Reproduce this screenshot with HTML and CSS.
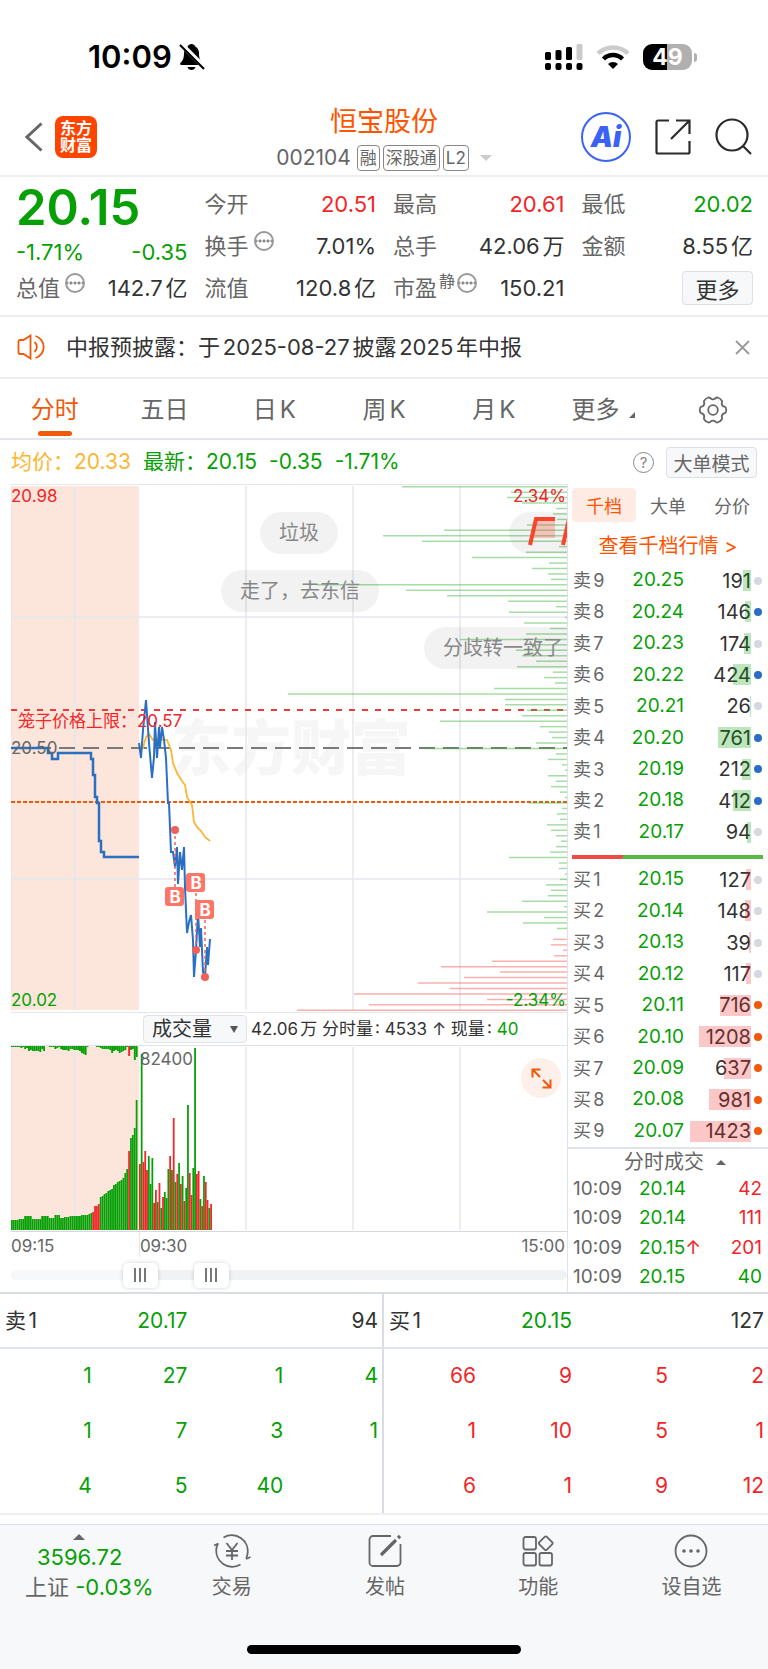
FILE: index.html
```html
<!DOCTYPE html>
<html lang="zh-CN">
<head>
  <meta charset="UTF-8">
  <meta name="viewport" content="width=device-width, initial-scale=1">
  <title>恒宝股份 002104</title>
  <link rel="stylesheet" href="styles.css">
</head>
<body>

  <div class="status-bar">
    <div class="status-left">
      <span class="clock">10:09</span>
      <svg width="26" height="28" viewBox="0 0 26 28">
        <path d="M12.500 1c-2 0-3 1-3.500 2.200C6.500 4.500 5 7 5 10c0 5-1 7.500-3.500 9.800-.7.800-.4 2.200.8 2.200h20.400c1.200 0 1.500-1.400.8-2.200C21 17.500 20 15 20 10c0-3-1.500-5.500-4-6.800C15.500 2 14.500 1 12.500 1zM8.500 24a4.200 4.200 0 0 0 8 0z" fill="#000"/>
        <path d="M2 1l24 24" stroke="#fff" stroke-width="5"/>
        <path d="M1 2l24 24" stroke="#000" stroke-width="2.200"/>
      </svg>
    </div>
    <div class="status-right">
      <svg width="38" height="27" viewBox="0 0 38 27">
        <g fill="#000">
          <rect x="0" y="8" width="6" height="8" rx="1.500"/>
          <rect x="10.500" y="6" width="6" height="10" rx="1.500"/>
          <rect x="21" y="3" width="6" height="13" rx="1.500"/>
          <rect x="0" y="19" width="6" height="7" rx="2"/>
          <rect x="10.500" y="19" width="6" height="7" rx="2"/>
          <rect x="21" y="19" width="6" height="7" rx="2"/>
          <rect x="31.500" y="19" width="6" height="7" rx="2"/>
        </g>
        <rect x="31.500" y="0" width="6" height="16" rx="1.500" fill="#cbcbcb"/>
      </svg>
      <svg width="34" height="26" viewBox="0 0 34 26" fill="none">
        <path d="M2 9.500a21.500 21.500 0 0 1 30 0" stroke="#cbcbcb" stroke-width="4.500"/>
        <path d="M7.500 15a13.500 13.500 0 0 1 19 0" stroke="#000" stroke-width="4.500"/>
        <path d="M17 25l-5-5a7 7 0 0 1 10 0z" fill="#000"/>
      </svg>
      <div class="battery">49</div>
    </div>
  </div>

  <header class="header">
    <div class="header-left">
      <button class="icon-btn" aria-label="返回">
        <svg width="18" height="30" viewBox="0 0 18 30" fill="none" stroke="#666" stroke-width="3">
          <path d="M16.500 1.500L2 15l14.500 13.500"/>
        </svg>
      </button>
      <a class="logo" href="#">东方<br>财富</a>
    </div>
    <div class="header-title">
      <h1>恒宝股份</h1>
      <div class="stock-code">
        <span>002104</span>
        <span class="tag">融</span>
        <span class="tag">深股通</span>
        <span class="tag">L2</span>
        <span class="caret"></span>
      </div>
    </div>
    <div class="header-right">
      <button class="icon-btn" aria-label="AI">
        <span class="ai-badge">Ai</span>
      </button>
      <button class="icon-btn" aria-label="分享">
        <svg width="36" height="36" viewBox="0 0 36 36" fill="none" stroke="#2b2b2b" stroke-width="2.200">
          <path d="M14 1.500H3a1.500 1.500 0 0 0-1.500 1.500v30A1.500 1.500 0 0 0 3 34.500h30a1.500 1.500 0 0 0 1.500-1.500V22"/>
          <path d="M21 1.500h13.500V15M34 2L16 20"/>
        </svg>
      </button>
      <button class="icon-btn" aria-label="搜索">
        <svg width="37" height="37" viewBox="0 0 37 37" fill="none" stroke="#2b2b2b" stroke-width="2.200">
          <circle cx="17" cy="17" r="15.500"/>
          <path d="M28 28l8 8"/>
        </svg>
      </button>
    </div>
  </header>

  <section class="quote">
    <div class="quote-col">
      <div class="last-price green">20.15</div>
      <div class="change green"><span>-1.71%</span><span>-0.35</span></div>
      <div class="stat short"><span class="label">总值<i class="more-dot"></i></span><span>142.7亿</span></div>
    </div>
    <div class="quote-col">
      <div class="stat"><span class="label">今开</span><span class="red">20.51</span></div>
      <div class="stat"><span class="label">换手<i class="more-dot"></i></span><span>7.01%</span></div>
      <div class="stat"><span class="label">流值</span><span>120.8亿</span></div>
    </div>
    <div class="quote-col">
      <div class="stat"><span class="label">最高</span><span class="red">20.61</span></div>
      <div class="stat"><span class="label">总手</span><span>42.06万</span></div>
      <div class="stat"><span class="label">市盈<sup>静</sup><i class="more-dot"></i></span><span>150.21</span></div>
    </div>
    <div class="quote-col">
      <div class="stat"><span class="label">最低</span><span class="green">20.02</span></div>
      <div class="stat"><span class="label">金额</span><span>8.55亿</span></div>
      <div class="stat"><span></span><button class="more-btn">更多</button></div>
    </div>
  </section>

  <section class="notice">
    <svg width="30" height="26" viewBox="0 0 30 26" fill="none" stroke="#f0590a" stroke-width="1.800">
      <path d="M13.500 1.500v23L6.500 20H3a1.500 1.500 0 0 1-1.500-1.500v-11A1.500 1.500 0 0 1 3 6h3.500z"/>
      <path d="M17.500 8a6.500 6.500 0 0 1 0 10M18.500 2a11.500 11.500 0 0 1 0 22"/>
    </svg>
    <p>中报预披露：于2025-08-27披露2025年中报</p>
    <button class="icon-btn" aria-label="关闭">
      <svg width="15" height="15" viewBox="0 0 15 15" stroke="#999" stroke-width="1.800">
        <path d="M1 1l13 13M14 1L1 14"/>
      </svg>
    </button>
  </section>

  <nav class="tabs">
    <a class="tab active" href="#">分时</a>
    <a class="tab" href="#">五日</a>
    <a class="tab" href="#">日K</a>
    <a class="tab" href="#">周K</a>
    <a class="tab" href="#">月K</a>
    <a class="tab tab-more" href="#">更多</a>
    <button class="icon-btn tab-gear" aria-label="设置">
      <svg width="30" height="28" viewBox="0 0 30 28" fill="none" stroke="#666" stroke-width="1.800">
        <path d="M10.500 1.500q1.500 0 2.200 1 2.300 1.600 4.600 0 .7-1 2.200-1 3 .8 4.500 3.500.3 1.300-.3 2.200 0 2.800 2.600 3.500 1.400.3 1.700 1.500.5 1.800 0 3.600-.3 1.200-1.700 1.500-2.600.700-2.600 3.500.6.9.3 2.200-1.500 2.700-4.500 3.500-1.500 0-2.200-1-2.300-1.600-4.600 0-.7 1-2.200 1-3-.8-4.500-3.500-.3-1.300.3-2.200 0-2.800-2.600-3.500-1.400-.3-1.700-1.500-.5-1.800 0-3.600.3-1.200 1.700-1.500 2.600-.7 2.600-3.500-.6-.9-.3-2.200 1.500-2.700 4.500-3.500z"/>
        <circle cx="15" cy="14" r="4.800"/>
      </svg>
    </button>
  </nav>

  <div class="info-row">
    <span class="avg">均价：20.33</span>
    <span class="green">最新：20.15</span>
    <span class="green">-0.35</span>
    <span class="green">-1.71%</span>
    <button class="help" aria-label="帮助">?</button>
    <button class="mode-btn">大单模式</button>
  </div>

  <main class="main">
    <div class="charts">
      <div class="price-chart">
        <div class="watermark">东方财富</div>
        <svg id="priceChart" viewBox="0 0 556 527" preserveAspectRatio="none"></svg>
        <span class="axis top-left red">20.98</span>
        <span class="axis top-right red">2.34%</span>
        <span class="axis bottom-left green">20.02</span>
        <span class="axis bottom-right green">-2.34%</span>
        <span class="axis prev-close">20.50</span>
        <span class="axis cage red">笼子价格上限：20.57</span>
        <div class="barrage barrage-a">垃圾</div>
        <div class="barrage barrage-b">走了，去东信</div>
        <div class="barrage barrage-c">分歧转一致了</div>
        <div class="barrage barrage-d">
          <svg width="60" height="30" viewBox="0 0 60 30">
            <path d="M7 2h20v19H4z" fill="#f4523b" opacity=".3"/>
            <path d="M2 28L8 2h19M35 28l6-26h19" fill="none" stroke="#f9442b" stroke-width="4"/>
          </svg>
        </div>
      </div>

      <div class="volume-info">
        <span class="select-wrap">
          <select aria-label="指标">
            <option>成交量</option>
            <option>MACD</option>
          </select>
        </span>
        <span>42.06万 分时量: 4533 ↑ 现量: <b>40</b></span>
      </div>

      <div class="volume-chart">
        <svg id="volumeChart" viewBox="0 0 556 185" preserveAspectRatio="none"></svg>
        <span class="axis volume-max">82400</span>
        <button class="expand" aria-label="放大">
          <svg width="21" height="21" viewBox="0 0 21 21" fill="none" stroke="#f0590a" stroke-width="2">
            <path d="M9.500 1.500h-8v8M2 2l7 7M11.500 19.500h8v-8M19 19l-7-7"/>
          </svg>
        </button>
      </div>

      <div class="time-axis">
        <span>09:15</span>
        <span class="time-open">09:30</span>
        <span class="time-close">15:00</span>
      </div>

      <div class="range">
        <input type="range" min="0" max="1000" value="215" aria-label="起始时间">
        <input type="range" min="0" max="1000" value="352" aria-label="结束时间">
      </div>
    </div>

    <aside class="book">
      <div class="book-tabs">
        <button class="active">千档</button>
        <button>大单</button>
        <button>分价</button>
      </div>
      <a class="book-link" href="#">查看千档行情 &gt;</a>
      <table class="levels" id="sellLevels"></table>
      <div class="ratio"></div>
      <table class="levels" id="buyLevels"></table>
      <button class="trades-title">分时成交</button>
      <table class="trades" id="trades"></table>
    </aside>
  </main>

  <section class="queues">
    <table class="queue sell" id="sellQueue"></table>
    <table class="queue buy" id="buyQueue"></table>
  </section>

  <footer class="bottom-bar">
    <nav class="bottom-nav">
      <a class="index" href="#">
        <span class="up"></span>
        <span class="green">3596.72</span>
        <span>上证 <span class="green">-0.03%</span></span>
      </a>
      <a href="#">
        <svg width="38" height="34" viewBox="0 0 38 34" fill="none" stroke="#666" stroke-width="1.800">
          <path d="M10.500 3.500A16 16 0 0 1 34.500 20c-.2 1.500-.7 3-1.300 4.200M27.500 30.500A16 16 0 0 1 3.500 14c.2-1.500.7-3 1.300-4.200"/>
          <path d="M1 11.500l4.500-2M33 25l4.500-2"/>
          <path d="M13.500 9l5.500 7 5.500-7M19 16v10M13 17h12M13 21.500h12"/>
        </svg>
        交易
      </a>
      <a href="#">
        <svg width="34" height="34" viewBox="0 0 34 34" fill="none" stroke="#666" stroke-width="1.800">
          <path d="M23 2H5a3.500 3.500 0 0 0-3.500 3.500v23A3.500 3.500 0 0 0 5 32h24a3.500 3.500 0 0 0 3.500-3.500V10"/>
          <path d="M13 21L28 6M30 4l2-2" stroke-width="3.200"/>
        </svg>
        发帖
      </a>
      <a href="#">
        <svg width="32" height="34" viewBox="0 0 32 34" fill="none" stroke="#666" stroke-width="1.800">
          <rect x="1.500" y="3" width="12.500" height="12.500" rx="2"/>
          <rect x="1.500" y="19" width="12.500" height="12.500" rx="2"/>
          <rect x="17.500" y="19" width="12.500" height="12.500" rx="2"/>
          <rect x="18.500" y="4" width="10.500" height="10.500" rx="1.500" transform="rotate(45 23.750 9.250)"/>
        </svg>
        功能
      </a>
      <a href="#">
        <svg width="34" height="34" viewBox="0 0 34 34" fill="none" stroke="#666" stroke-width="1.800">
          <circle cx="17" cy="17" r="15.500"/>
          <g fill="#666" stroke="none">
            <circle cx="10" cy="17" r="1.800"/><circle cx="17" cy="17" r="1.800"/><circle cx="24" cy="17" r="1.800"/>
          </g>
        </svg>
        设自选
      </a>
    </nav>
    <div class="home-indicator"></div>
  </footer>

  <script src="script.js"></script>
</body>
</html>
```
FILE: styles.css
```css
* {
  box-sizing: border-box;
}

body {
  margin: 0;
  background-color: #ffffff;
  color: #333;
  font-family: Inter, "Noto Sans CJK SC", sans-serif;
  font-size: 20px;
  line-height: 1.2;
  text-autospace: normal;
}

a {
  color: inherit;
  text-decoration: none;
}

button, select, input {
  margin: 0;
  font-family: inherit;
  color: inherit;
}

button {
  padding: 0;
  border: none;
  background: none;
  cursor: pointer;
}

svg {
  display: block;
}

table {
  width: 100%;
  border-collapse: collapse;
}

td, th {
  padding: 0;
  font-weight: normal;
}

.red {
  color: #f22528;
}

.green {
  color: #06a006;
}

.icon-btn {
  display: flex;
}

/* status bar */
.status-bar {
  display: flex;
  justify-content: space-between;
  align-items: center;
  height: 90px;
  padding: 24px 76px 0 88px;
}

.status-left, .status-right {
  display: flex;
  align-items: center;
}

.status-left {
  gap: 7px;
}

.status-right {
  gap: 13px;
}

.clock {
  color: #000;
  font-size: 31px;
  font-weight: 600;
}

.battery {
  position: relative;
  width: 49px;
  height: 26px;
  border-radius: 9px;
  background: linear-gradient(90deg, #000 50%, #b0b0b0 50%);
  color: #fff;
  font-size: 23px;
  font-weight: 700;
  line-height: 26px;
  text-align: center;
}

.battery::after {
  content: "";
  position: absolute;
  right: -5px;
  top: 9px;
  width: 3px;
  height: 9px;
  border-radius: 0 3px 3px 0;
  background-color: #b0b0b0;
}

/* header */
.header {
  display: grid;
  grid-template-columns: 1fr auto 1fr;
  align-items: center;
  height: 87px;
  padding: 8px 16px 0;
  border-bottom: 2px solid #eeeeee;
}

.header-left, .header-right {
  display: flex;
  align-items: center;
}

.header-left {
  gap: 12px;
  padding-left: 9px;
}

.header-right {
  justify-content: flex-end;
  gap: 24px;
}

.logo {
  width: 42px;
  height: 42px;
  padding-top: 4px;
  border-radius: 8px;
  background-color: #ff4400;
  color: #fff;
  font-size: 16px;
  font-weight: 700;
  line-height: 17px;
  text-align: center;
}

.header-title {
  padding-top: 4px;
  text-align: center;
}

.header-title h1 {
  margin: 0;
  color: #ff5500;
  font-size: 27px;
  font-weight: 400;
  line-height: 39px;
}

.stock-code {
  display: flex;
  align-items: center;
  justify-content: center;
  gap: 3px;
  height: 34px;
  color: #666;
}

.stock-code span:first-child {
  margin-right: 3px;
  font-size: 21px;
}

.tag {
  height: 26px;
  padding: 0 2px;
  border: 1px solid #888;
  border-radius: 4px;
  font-size: 17px;
  line-height: 24px;
}

.caret {
  margin-left: 8px;
  border: 6px solid transparent;
  border-top-color: #ccc;
  border-bottom: 0;
}

.ai-badge {
  width: 50px;
  height: 50px;
  border: 2px solid #3a63f6;
  border-radius: 50%;
  color: #3a63f6;
  font-size: 28px;
  font-weight: 900;
  font-style: italic;
  line-height: 46px;
}

/* quote */
.quote {
  display: grid;
  grid-template-columns: repeat(4, 1fr);
  gap: 17px;
  padding: 6px 15px 6px 16px;
  border-bottom: 2px solid #eeeeee;
  font-size: 22px;
}

.last-price {
  height: 52px;
  font-size: 49px;
  font-weight: 600;
  line-height: 50px;
}

.change {
  display: flex;
  justify-content: space-between;
  height: 33px;
  line-height: 35px;
}

.stat {
  display: flex;
  justify-content: space-between;
  align-items: center;
  height: 42px;
  white-space: nowrap;
}

.stat.short {
  height: 40px;
}

.label {
  display: flex;
  align-items: center;
  color: #666;
}

.label sup {
  margin: -14px 0 0 2px;
  font-size: 16px;
  line-height: 16px;
}

.more-dot {
  width: 20px;
  height: 20px;
  margin: -10px 0 0 5px;
  border: 2px solid #999;
  border-radius: 50%;
  background: radial-gradient(circle at 2px 2px, #888 1px, transparent 2px) 2px 6px / 4px 4px repeat-x content-box;
}

.label sup + .more-dot {
  margin-left: 2px;
}

.more-btn {
  width: 71px;
  height: 34px;
  border: 1px solid #dddfe6;
  border-radius: 4px;
  background-color: #f7f8fa;
  font-size: 22px;
}

/* notice */
.notice {
  display: flex;
  align-items: center;
  height: 62px;
  padding: 0 18px 0 17px;
  border-bottom: 2px solid #eeeeee;
}

.notice p {
  flex: 1;
  margin: 0 0 0 19px;
  font-size: 22px;
}

/* period tabs */
.tabs {
  display: grid;
  grid-template-columns: repeat(7, 1fr);
  height: 61px;
  border-bottom: 2px solid #e3e5ea;
  color: #666;
  font-size: 24px;
}

.tab {
  position: relative;
  line-height: 61px;
  text-align: center;
}

.tab.active {
  color: #f0590a;
}

.tab.active::after {
  content: "";
  position: absolute;
  left: 50%;
  bottom: 4px;
  width: 34px;
  height: 5px;
  margin-left: -17px;
  border-radius: 3px;
  background-color: #f0590a;
}

.tab-more::after {
  content: "";
  display: inline-block;
  margin-left: 10px;
  border: 3px solid #666;
  border-top-color: transparent;
  border-left-color: transparent;
}

.tab-gear {
  align-items: center;
  justify-content: center;
}

.info-row {
  display: flex;
  align-items: center;
  gap: 12px;
  height: 44px;
  margin: 0 11px;
  font-size: 21px;
}

.avg {
  color: #fcb632;
}

.help {
  width: 21px;
  height: 21px;
  margin-left: auto;
  border: 1px solid #888;
  border-radius: 50%;
  color: #888;
  font-size: 15px;
  line-height: 19px;
}

.mode-btn {
  width: 91px;
  height: 31px;
  border: 1px solid #dddfe6;
  border-radius: 4px;
  background-color: #f7f8fa;
  color: #666;
  font-size: 19px;
}

/* charts */
.main {
  display: flex;
  border-bottom: 2px solid #d9dce3;
}

.charts {
  flex: 1;
  min-width: 0;
  padding-left: 11px;
  border-right: 1px solid #dfe2e8;
}

.charts svg[id] {
  width: 100%;
}

.price-chart {
  position: relative;
  height: 529px;
  overflow: hidden;
  border: 1px solid #e4e6eb;
  border-width: 1px 0;
}

.price-chart svg[id] {
  position: relative;
  height: 527px;
}

.watermark {
  position: absolute;
  left: 160px;
  top: 227px;
  color: #f6f6f6;
  font-size: 60px;
  font-weight: 900;
  line-height: 72px;
}

.axis {
  position: absolute;
  font-size: 17px;
  line-height: 20px;
}

.top-left {
  left: 0;
  top: 1px;
}

.top-right {
  right: 1px;
  top: 1px;
}

.bottom-left {
  left: 0;
  bottom: 2px;
}

.bottom-right {
  right: 1px;
  bottom: 2px;
}

.prev-close {
  left: 0;
  top: 253px;
  color: #666;
}

.cage {
  left: 7px;
  top: 226px;
}

.barrage {
  position: absolute;
  height: 42px;
  padding: 0 19px;
  border-radius: 21px;
  background-color: rgba(0, 0, 0, 0.05);
  color: #888;
  line-height: 42px;
  white-space: nowrap;
}

.barrage-a {
  left: 249px;
  top: 27px;
}

.barrage-b {
  left: 210px;
  top: 85px;
}

.barrage-c {
  left: 413px;
  top: 142px;
}

.barrage-d {
  left: 498px;
  top: 27px;
  padding-top: 5px;
}

.volume-info {
  display: flex;
  align-items: center;
  gap: 4px;
  height: 33px;
  padding-left: 132px;
  border-bottom: 1px solid #dfe2e8;
  font-size: 17px;
  white-space: nowrap;
}

.volume-info b {
  color: #06a006;
  font-weight: 400;
}

.select-wrap {
  position: relative;
}

.select-wrap::after {
  content: "";
  position: absolute;
  right: 9px;
  top: 11px;
  border: 4px solid transparent;
  border-top: 7px solid #555;
  border-bottom: 0;
}

select {
  appearance: none;
  display: block;
  width: 104px;
  height: 28px;
  padding: 0 8px;
  border: 1px solid #dfe2e8;
  border-radius: 4px;
  background-color: #f7f8fa;
  font-size: 20px;
}

.volume-chart {
  position: relative;
  border-bottom: 1px solid #d5d8de;
}

.volume-chart svg[id] {
  height: 185px;
}

.volume-max {
  left: 129px;
  top: 3px;
  color: #666;
}

.expand {
  position: absolute;
  right: 6px;
  top: 12px;
  display: flex;
  align-items: center;
  justify-content: center;
  width: 40px;
  height: 40px;
  border-radius: 50%;
  background-color: #fdf0ea;
}

.time-axis {
  display: flex;
  height: 25px;
  color: #666;
  font-size: 17px;
  line-height: 28px;
}

.time-axis span:first-child {
  width: 23%;
}

.time-open {
  border-left: 1px solid #e4e6eb;
}

.time-close {
  margin-left: auto;
  padding-right: 2px;
}

.range {
  position: relative;
  height: 35px;
  padding-top: 13px;
}

.range::before {
  content: "";
  display: block;
  height: 10px;
  border-radius: 5px;
  background: linear-gradient(90deg, #f7f8fa 23%, #f1f2f4 23%);
}

.range input {
  appearance: none;
  position: absolute;
  left: 0;
  top: 5px;
  width: 100%;
  height: 26px;
  background: none;
  pointer-events: none;
}

.range input::-webkit-slider-thumb {
  appearance: none;
  width: 35px;
  height: 25px;
  border-radius: 5px;
  background: repeating-linear-gradient(90deg, #777 0 2px, transparent 2px 5px) 11px 5px / 12px 14px no-repeat #fff;
  box-shadow: 0 0 4px rgba(0, 0, 0, 0.18);
  pointer-events: auto;
}

/* order book */
.book {
  width: 200px;
}

.book-tabs {
  display: grid;
  grid-template-columns: 64px 64px 64px;
  padding: 4px 0 0 4px;
}

.book-tabs button {
  height: 34px;
  border-radius: 4px;
  color: #666;
  font-size: 18px;
}

.book-tabs .active {
  background-color: #feece4;
  color: #ff5500;
}

.book-link {
  display: block;
  height: 43px;
  color: #ff5500;
  line-height: 48px;
  text-align: center;
}

.levels {
  height: 283px;
}

.levels th {
  width: 48px;
  padding-left: 5px;
  color: #666;
  font-size: 18px;
  text-align: left;
}

.levels td {
  text-align: right;
}

.levels .price {
  width: 68px;
  font-size: 19px;
}

.levels .amount {
  position: relative;
}

.levels .dot {
  width: 17px;
}

.level-bar {
  position: absolute;
  right: 0;
  top: 5px;
  height: 21px;
  background-color: rgba(0, 160, 0, 0.26);
}

#buyLevels .level-bar {
  background-color: rgba(245, 30, 30, 0.25);
}

.dot i {
  display: block;
  width: 8px;
  height: 8px;
  margin-left: 3px;
  border-radius: 50%;
  background-color: #d5d8df;
}

.dot .blue {
  background-color: #2b6cc4;
}

.dot .orange {
  background-color: #f0590a;
}

.ratio {
  height: 4px;
  margin: 7px 5px 5px 4px;
  background: linear-gradient(120deg, #f04a46 27%, #57b944 27%);
}

.trades-title {
  display: flex;
  align-items: center;
  justify-content: center;
  gap: 12px;
  width: 100%;
  height: 28px;
  padding-left: 14px;
  border-top: 2px solid #dfe2e8;
  color: #666;
  font-size: 20px;
  line-height: 24px;
}

.trades-title::after {
  content: "";
  border: 5px solid transparent;
  border-bottom-color: #666;
  border-top: 0;
}

.trades {
  height: 117px;
  font-size: 19px;
}

.trades th {
  width: 71px;
  padding-left: 5px;
  color: #666;
  text-align: left;
}

.trades td:last-child {
  padding-right: 6px;
  text-align: right;
}

/* queues */
.queues {
  display: grid;
  grid-template-columns: 1fr 1fr;
  border-bottom: 2px solid #f0f0f2;
}

.queue {
  table-layout: fixed;
  font-size: 21px;
  text-align: right;
}

.queue.sell {
  border-right: 2px solid #d9dce3;
}

.queue th {
  height: 54px;
  padding-right: 4px;
  border-bottom: 2px solid #dfe2e8;
}

.queue th:first-child {
  padding-left: 5px;
  text-align: left;
}

.queue td {
  height: 55px;
  padding-right: 4px;
}

.queue.sell td {
  color: #06a006;
}

.queue.buy td {
  color: #f22528;
}

/* bottom bar */
.bottom-bar {
  margin-top: 9px;
  padding-bottom: 15px;
  border-top: 1px solid #dbe0e6;
  background-color: #f7f8fa;
}

.bottom-nav {
  display: grid;
  grid-template-columns: repeat(5, 1fr);
  height: 120px;
  padding: 9px 0 0 2px;
  color: #666;
}

.bottom-nav a {
  display: flex;
  flex-direction: column;
  align-items: center;
  gap: 7px;
}

.bottom-nav .index {
  gap: 4px;
  padding-left: 23px;
  align-items: flex-start;
  font-size: 22px;
}

.index > span:nth-child(2) {
  margin-left: 12px;
}

.up {
  margin-left: 48px;
  border: 6px solid transparent;
  border-bottom-color: #666;
  border-top: 0;
}

.home-indicator {
  width: 274px;
  height: 9px;
  margin: 0 auto;
  border-radius: 5px;
  background-color: #000;
}
```
FILE: script.js
```js
const GREEN = '#06a006';
const RED = '#f22528';

// ---- price chart ----
const depth = [
  165, 56, 60, 45, 11, 14, 10, 40, 123, 184, 145, 8, 41, 95, 18, 35, 19, 16, 250, 161,
  120, 59, 11, 58, 2, 43, 17, 41, 107, 37, 51, 45, 31, 50, 14, 23, 12, 73, 279, 62,
  62, 40, 45, 127, 27, 18, 15, 31, 142, 11, 19, 5, 2, 19, 11, 16, 7, 2, 38, 5,
  10, 7, 20, 16, 11, 6, 11, 17, 58, 8, 8, 2, 7, 21, 16, 19, 45, 3, 80, 23,
  44, 10, 0, 14, 16, 4, 13, 75, 126, 67, 103, 149, 117, 213, 80, 198, 270
];
const firstBuy = 83;

const preOpen = '0,263 37,263 37,268 41,268 41,274 47,274 47,268 80,268 80,274 82,274 82,290 84,290 84,312 ' +
  '86,312 86,318 88,318 88,356 90,356 90,367 93,367 93,372 128,372';
const price = '128,258 130,273 132,245 135,215 138,258 141,293 143,272 144,237 146,273 148,242 149,263 151,242 ' +
  '153,255 155,273 157,318 158,318 160,367 162,367 164,382 166,362 167,399 169,367 171,385 173,362 174,402 ' +
  '176,448 178,437 180,430 182,455 183,492 185,465 187,428 189,462 190,443 192,487 194,492 196,462 197,480 199,454';
const average = '128,262 132,263 135,252 138,249 142,255 147,254 156,255 160,265 162,278 166,288 171,296 174,300 ' +
  '176,312 181,320 183,337 186,342 190,346 194,352 199,356';
const buys = [[164, 345, 412], [185, 465, 398], [194, 492, 425]];

function line(x1, y1, x2, y2, color, extra = '') {
  return `<line x1="${x1}" y1="${y1}" x2="${x2}" y2="${y2}" stroke="${color}" ${extra}/>`;
}

function drawPrice() {
  let s = '<rect x="0" y="1" width="128" height="524" fill="#fce5da"/>';
  [0, 64, 235, 342, 449].forEach(x => s += line(x, 1, x, 525, '#e4e7ee', 'stroke-width="1.500"'));
  [132, 394].forEach(y => s += line(0, y, 556, y, '#e4e7ee', 'stroke-width="1.500"'));
  s += line(0, 225, 556, 225, '#ee3a3a', 'stroke-width="2" stroke-dasharray="6 7"');
  s += line(0, 263, 556, 263, '#7a7a7a', 'stroke-width="2" stroke-dasharray="16 8"');
  s += line(0, 317, 556, 317, '#f0590a', 'stroke-width="2" stroke-dasharray="4 2"');
  depth.forEach((len, i) => {
    const y = 1.7 + i * 5.454;
    if (len) s += line(556 - len, y, 556, y, i < firstBuy ? '#3cb43c' : '#fa5050', 'stroke-width="1.500" opacity=".45"');
  });
  s += `<polyline points="${preOpen}" fill="none" stroke="#2b6fc2" stroke-width="2.500"/>`;
  s += `<polyline points="${average}" fill="none" stroke="#fcb632" stroke-width="1.800"/>`;
  s += `<polyline points="${price}" fill="none" stroke="#2b6fc2" stroke-width="2"/>`;
  buys.forEach(([x, dotY, tagY]) => {
    s += line(x, dotY, x, tagY, '#f0605a', 'stroke-width="1.500" stroke-dasharray="3 3"');
    s += `<circle cx="${x}" cy="${dotY}" r="4" fill="#f0605a"/>`;
    s += `<rect x="${x - 10}" y="${tagY - 10}" width="19" height="19" rx="3" fill="#fd7567"/>`;
    s += `<text x="${x}" y="${tagY + 6}" fill="#fff" font-size="17" font-weight="700" text-anchor="middle">B</text>`;
  });
  document.getElementById('priceChart').innerHTML = s;
}

// ---- volume chart ----
const preVolume = [
  10, 10, 10, 10, 11, 11, 11, 14, 14, 14, 14, 11, 11, 11, 11, 11, 14, 14, 14, 14, 12, 12, 12, 15, 15, 15,
  12, 12, 13, 13, 13, 14, 14, 14, 14, 14, 14, 15, 15, 15, 15, 16, 17, 18, 24, 24, 26, 33, 34, 36, 37,
  39, 40, 41, 45, 46, 48, 49, 50, 52, 57, 61, 79, 92, 95, 102, 130
];
const preRed = [43, 44, 45, 46, 62];
const unmatched = [
  1, 1, 1, 1, 1, 2, 1, 3, 2, 5, 4, 5, 5, 5, 5, 6, 3, 5, 0, 0, 1, 1, 1, 3, 2, 1, 3, 4, 4, 4, 5, 3, 3, 4,
  4, 4, 5, 7, 8, 9, 1, 0, 0, 0, 0, 1, 1, 2, 3, 3, 3, 3, 4, 7, 5, 4, 5, 7, 6, 5, 4, 1, 10, 4, 3, 14, 11
];
// positive is up, negative is down
const volume = [
  66, -176, 68, 79, 60, -74, -46, -72, 27, 40, -28, 47, -22, 33, -38, -32, -61, 74, -60, 112, -48, 56, -67,
  46, -54, 29, -42, -125, 57, 35, -62, -182, 56, 59, -31, 24, -54, 48, 30, -22, 26
];

function bar(x, y, w, h, color) {
  return `<rect x="${x}" y="${y}" width="${w}" height="${h}" fill="${color}"/>`;
}

function drawVolume() {
  let s = bar(0, 1, 128, 183, '#fce5da');
  [0, 64, 235, 342, 449].forEach(x => s += line(x, 1, x, 184, '#e4e7ee', 'stroke-width="1.500"'));
  preVolume.forEach((h, i) => s += bar(i * 1.89, 184 - h, 1.75, h, preRed.includes(i) ? RED : GREEN));
  unmatched.forEach((h, i) => s += bar(i * 1.89, 0, 1.89, h, i === 62 ? RED : GREEN));
  volume.forEach((v, i) => s += bar(128 + i * 1.78, 184 - Math.abs(v), 1.78, Math.abs(v), v > 0 ? RED : GREEN));
  document.getElementById('volumeChart').innerHTML = s;
}

// ---- order book ----
const sells = [
  [9, '20.25', 191, ''], [8, '20.24', 146, 'blue'], [7, '20.23', 174, ''], [6, '20.22', 424, 'blue'],
  [5, '20.21', 26, ''], [4, '20.20', 761, 'blue'], [3, '20.19', 212, 'blue'], [2, '20.18', 412, 'blue'],
  [1, '20.17', 94, '']
];
const bids = [
  [1, '20.15', 127, ''], [2, '20.14', 148, ''], [3, '20.13', 39, ''], [4, '20.12', 117, ''],
  [5, '20.11', 716, 'orange'], [6, '20.10', 1208, 'orange'], [7, '20.09', 637, 'orange'],
  [8, '20.08', 981, 'orange'], [9, '20.07', 1423, 'orange']
];

function fillLevels(id, name, rows) {
  document.getElementById(id).innerHTML = rows.map(([n, p, amount, dot]) => `
    <tr>
      <th scope="row">${name}${n}</th>
      <td class="price green">${p}</td>
      <td class="amount">${amount}<span class="level-bar" style="width:${Math.round(amount * 61 / 1423)}px"></span></td>
      <td class="dot"><i class="${dot}"></i></td>
    </tr>`).join('');
}

const trades = [
  ['20.14', '', 42, 'red'], ['20.14', '', 111, 'red'], ['20.15', '↑', 201, 'red'], ['20.15', '', 40, 'green']
];

function fillTrades() {
  document.getElementById('trades').innerHTML = trades.map(([p, arrow, n, color]) => `
    <tr>
      <th scope="row">10:09</th>
      <td class="green">${p}<span class="red">${arrow}</span></td>
      <td class="${color}">${n}</td>
    </tr>`).join('');
}

function fillQueue(id, name, p, total, rows) {
  document.getElementById(id).innerHTML = `
    <thead><tr><th>${name}</th><th class="green">${p}</th><th colspan="2">${total}</th></tr></thead>
    <tbody>${rows.map(r => '<tr>' + r.map(n => `<td>${n}</td>`).join('') + '</tr>').join('')}</tbody>`;
}

drawPrice();
drawVolume();
fillLevels('sellLevels', '卖', sells);
fillLevels('buyLevels', '买', bids);
fillTrades();
fillQueue('sellQueue', '卖1', '20.17', 94, [[1, 27, 1, 4], [1, 7, 3, 1], [4, 5, 40, '']]);
fillQueue('buyQueue', '买1', '20.15', 127, [[66, 9, 5, 2], [1, 10, 5, 1], [6, 1, 9, 12]]);
```
